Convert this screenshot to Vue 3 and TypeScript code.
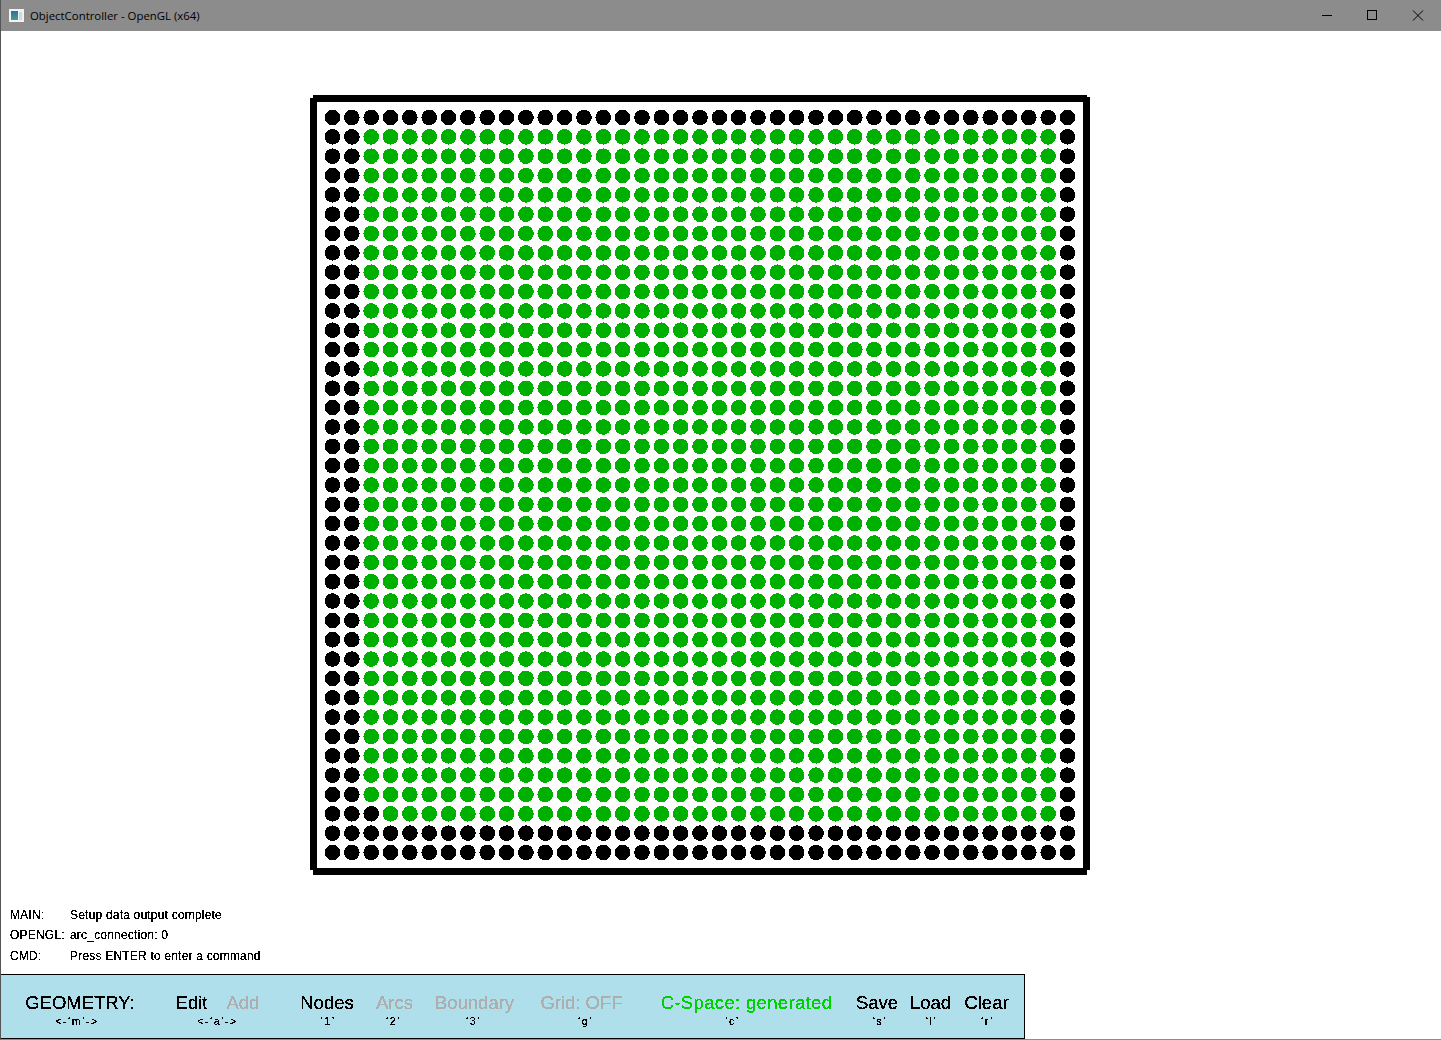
<script setup lang="ts">
const COUNT = 39;
const PITCH = 19.342;
const indices = Array.from({ length: COUNT }, (_, i) => i);

function isGreen(row: number, col: number): boolean {
  if (row === 0 || row >= 37) return false;
  if (col <= 1 || col === 38) return false;
  return !(row === 36 && col === 2);
}

const dots = indices.flatMap((row) =>
  indices.map((col) => ({
    key: `${row}-${col}`,
    cx: 22.5 + col * PITCH,
    cy: 22.5 + row * PITCH,
    fill: isGreen(row, col) ? "#00b000" : "#000000",
  })),
);

interface Cmd {
  label: string;
  hint: string;
  tone: "on" | "off" | "ok";
  x: number;
  width: number;
  hintShift: number;
}

const raw: Cmd[] = [
  { label: "Nodes", hint: "‘1’", tone: "on", x: 300, width: 54, hintShift: 1 },
  { label: "Arcs", hint: "‘2’", tone: "off", x: 376, width: 37, hintShift: -1 },
  { label: "Boundary", hint: "‘3’", tone: "off", x: 435, width: 79, hintShift: -1 },
  { label: "Grid: OFF", hint: "‘g’", tone: "off", x: 541, width: 81, hintShift: 4 },
  { label: "C-Space: generated", hint: "‘c’", tone: "ok", x: 661, width: 171, hintShift: -14 },
  { label: "Save", hint: "‘s’", tone: "on", x: 856, width: 42, hintShift: 3 },
  { label: "Load", hint: "‘l’", tone: "on", x: 910, width: 41, hintShift: 1 },
  { label: "Clear", hint: "‘r’", tone: "on", x: 965, width: 43, hintShift: 1 },
];

const PAIR_END = 260;
const items = raw.map((c, i) => ({
  ...c,
  gap: c.x - (i === 0 ? PAIR_END : raw[i - 1].x + raw[i - 1].width),
}));

const logs = [
  ["MAIN:", "Setup data output complete"],
  ["OPENGL:", "arc_connection: 0"],
  ["CMD:", "Press ENTER to enter a command"],
];
</script>

<template>
  <div class="window">
    <svg class="defs" width="0" height="0" aria-hidden="true">
      <filter id="bitmap" x="0" y="0" width="100%" height="100%" color-interpolation-filters="sRGB">
        <feComponentTransfer>
          <feFuncA type="discrete" tableValues="0 1 1" />
        </feComponentTransfer>
      </filter>
    </svg>

    <header class="titlebar">
      <svg class="appicon" width="15" height="13" viewBox="0 0 15 13">
        <defs>
          <linearGradient id="iconfill" x1="0" y1="0" x2="0" y2="1">
            <stop offset="0" stop-color="#2a6fa8" />
            <stop offset="1" stop-color="#4f9c84" />
          </linearGradient>
        </defs>
        <rect x="0" y="0" width="15" height="13" fill="#f2f2f2" />
        <rect x="2" y="2" width="7" height="9" fill="url(#iconfill)" />
        <rect x="10" y="3" width="3" height="8" fill="#c9dcdc" />
      </svg>
      <span class="title">ObjectController - OpenGL (x64)</span>
      <div class="controls">
        <svg width="12" height="12" viewBox="0 0 12 12"><path d="M1 5.5H11" stroke="#000" fill="none" /></svg>
        <svg width="12" height="12" viewBox="0 0 12 12"><rect x="1.5" y="0.5" width="9" height="9" stroke="#000" fill="none" /></svg>
        <svg class="close" width="12" height="12" viewBox="0 0 12 12"><path d="M1 0.5L11 10.5M11 0.5L1 10.5" stroke="#000" fill="none" /></svg>
      </div>
    </header>

    <main class="stage">
      <svg class="field" width="780" height="780" viewBox="0 0 780 780" shape-rendering="crispEdges">
        <rect x="3" y="0" width="774" height="7" />
        <rect x="0" y="3" width="7" height="772" />
        <rect x="773" y="2" width="7" height="773" />
        <rect x="3" y="773" width="774" height="7" />
        <circle v-for="d in dots" :key="d.key" :cx="d.cx" :cy="d.cy" r="7.8" :fill="d.fill" />
      </svg>
    </main>

    <section class="log">
      <div v-for="l in logs" :key="l[0]" class="logrow">
        <span class="logkey">{{ l[0] }}</span><span>{{ l[1] }}</span>
      </div>
    </section>

    <footer class="menu">
      <div class="cmd geo">
        <span class="big">GEOMETRY:</span>
        <span class="hint">&lt;-‘m’-&gt;</span>
      </div>
      <div class="cmd pair">
        <div class="pairlabels"><span class="big">Edit</span><span class="big off">Add</span></div>
        <span class="hint">&lt;-‘a’-&gt;</span>
      </div>
      <div
        v-for="c in items"
        :key="c.label"
        class="cmd"
        :style="{ width: c.width + 'px', marginLeft: c.gap + 'px' }"
      >
        <span class="big" :class="c.tone">{{ c.label }}</span>
        <span class="hint" :style="{ marginLeft: c.hintShift * 2 + 'px' }">{{ c.hint }}</span>
      </div>
    </footer>
  </div>
</template>

<style>
html, body { margin: 0; background: #fff; }
</style>

<style scoped>
.window {
  width: 1441px;
  height: 1040px;
  display: flex;
  flex-direction: column;
  overflow: hidden;
  font-family: "Liberation Sans", Arial, sans-serif;
  color: #000;
  box-sizing: border-box;
  border-left: 1px solid #555;
  border-bottom: 1px solid #8c8c8c;
}
.defs { position: absolute; }
.titlebar {
  height: 31px;
  margin-left: -1px;
  background: #8c8c8c;
  display: flex;
  align-items: center;
  padding-left: 9px;
  flex: none;
}
.title { font-family: "Open Sans", sans-serif; font-size: 11.4px; margin-left: 6px; color: #000; }
.controls { margin-left: auto; display: flex; gap: 33px; padding-right: 17px; }
.close { margin-left: 1px; }
.stage { height: 874px; flex: none; padding: 64px 0 0 309px; box-sizing: border-box; }
.field { display: block; }
.log {
  height: 69px;
  flex: none;
  padding-left: 9px;
  font-size: 12px;
  letter-spacing: 0.2px;
  box-sizing: border-box;
  filter: url(#bitmap);
}
.logrow { height: 20.4px; display: flex; align-items: center; }
.logrow:first-child { height: 20px; }
.logrow:last-child { height: 21px; }
.logkey { width: 60px; }
.menu {
  width: 1025px;
  height: 65px;
  box-sizing: border-box;
  background: #afdfea;
  border: 1px solid #000;
  display: flex;
  padding-left: 24px;
  margin-left: -1px;
  flex: none;
}
.cmd { display: flex; flex-direction: column; align-items: center; padding-top: 17px; white-space: nowrap; filter: url(#bitmap); }
.geo { width: 110px; }
.geo .hint { margin-left: -6px; }
.pair { width: 85px; margin-left: 40px; }
.pairlabels { display: flex; gap: 19px; }
.big { font-size: 18.5px; line-height: 21px; }
.off { color: #aeaeae; }
.ok { color: #00d000; letter-spacing: 0.34px; }
.hint { font-size: 10.5px; line-height: 12px; letter-spacing: 1.5px; padding-top: 2px; }
</style>
